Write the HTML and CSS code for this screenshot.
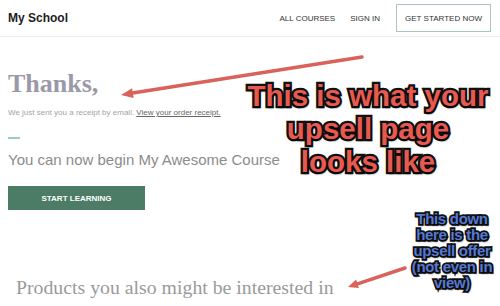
FILE: index.html
```html
<!DOCTYPE html>
<html lang="en">
<head>
  <meta charset="UTF-8">
  <meta name="viewport" content="width=device-width, initial-scale=1.0">
  <title>Thanks</title>
  <link rel="stylesheet" href="styles.css">
</head>
<body>
  <!-- 顶部导航 -->
  <header class="topbar">
    <div class="brand">My School</div>
    <nav class="nav">
      <a class="nav-link" href="#">ALL COURSES</a>
      <a class="nav-link" href="#">SIGN IN</a>
      <a class="nav-cta" href="#">GET STARTED NOW</a>
    </nav>
  </header>

  <!-- 感谢页内容 -->
  <main class="content">
    <h1 class="thanks">Thanks,</h1>
    <p class="receipt">We just sent you a receipt by email. <a href="#">View your order receipt.</a></p>
    <div class="rule"></div>
    <p class="begin">You can now begin My Awesome Course</p>
    <a class="start" href="#">START LEARNING</a>
    <h2 class="products">Products you also might be interested in</h2>
  </main>

  <!-- 标注 -->
  <svg class="arrows" width="500" height="306" viewBox="0 0 500 306">
    <line x1="362" y1="57" x2="131" y2="93.3" />
    <polygon points="121,95 132.1,88.2 133.6,98" />
    <line x1="405" y1="268" x2="356" y2="284.3" />
    <polygon points="348,287 356.1,279.6 358.9,288.1" />
  </svg>
  <div class="note note-red">This is what your<br>upsell page<br>looks like</div>
  <div class="note note-blue">This down<br>here is the<br>upsell offer<br>(not even in<br>view)</div>
</body>
</html>
```

FILE: styles.css
```css
* {
  padding: 0;
  margin: 0;
  box-sizing: border-box;
}

body {
  position: relative;
  width: 500px;
  height: 306px;
  overflow: hidden;
  background-color: #fff;
  font-family: "Liberation Sans", Arial, sans-serif;
}

a {
  color: inherit;
  text-decoration: none;
}

.topbar {
  display: flex;
  justify-content: space-between;
  align-items: center;
  height: 37px;
  padding: 0 9px 0 8px;
  border-bottom: 1px solid #ececec;
}

.brand {
  font-size: 12px;
  font-weight: bold;
  color: #1d1d1d;
}

.nav {
  display: flex;
  align-items: center;
  gap: 15px;
}

.nav-link {
  font-size: 8px;
  color: #333;
}

.nav-cta {
  display: flex;
  align-items: center;
  justify-content: center;
  width: 95px;
  height: 28px;
  margin-left: 1px;
  border: 1px solid #a9c6bc;
  font-size: 8px;
  color: #333;
}

.content {
  padding: 0 8px;
}

.thanks {
  margin-top: 31px;
  font-family: "Liberation Serif", "Times New Roman", serif;
  font-size: 26px;
  line-height: 32px;
  font-weight: bold;
  color: #9b99a7;
}

.receipt {
  margin-top: 8px;
  font-size: 8px;
  line-height: 10px;
  color: #a3a3a3;
}

.receipt a {
  color: #666;
  text-decoration: underline;
}

.rule {
  width: 12px;
  height: 2px;
  margin-top: 19px;
  background-color: #9fcbbd;
}

.begin {
  margin-top: 11px;
  font-size: 15px;
  line-height: 20px;
  color: #8c8c8c;
}

.start {
  display: flex;
  align-items: center;
  justify-content: center;
  width: 137px;
  height: 24px;
  margin-top: 16px;
  background-color: #4c7c65;
  font-size: 8px;
  font-weight: bold;
  color: #fff;
}

.products {
  margin-top: 66px;
  padding-left: 8px;
  font-family: "Liberation Serif", "Times New Roman", serif;
  font-size: 19.8px;
  line-height: 22px;
  font-weight: normal;
  color: #9a9a9a;
}

/* 标注层 */
.arrows {
  position: absolute;
  left: 0;
  top: 0;
  pointer-events: none;
}

.arrows line {
  stroke: #d9625a;
  stroke-width: 3.5;
  stroke-linecap: round;
}

.arrows polygon {
  fill: #d9625a;
}

.note {
  position: absolute;
  text-align: center;
  font-weight: bold;
  color: #fff;
  paint-order: stroke fill;
  text-shadow: 1px 2px 2px rgba(0, 0, 0, 0.6);
}

.note-red {
  left: 220px;
  top: 79px;
  width: 296px;
  font-size: 29.5px;
  line-height: 33px;
  color: #e85a50;
  -webkit-text-stroke: 4.5px #111;
}

.note-blue {
  left: 400px;
  top: 211px;
  width: 104px;
  font-size: 15px;
  line-height: 16px;
  letter-spacing: -0.3px;
  color: #5679d4;
  -webkit-text-stroke: 3.5px #111;
}
```
